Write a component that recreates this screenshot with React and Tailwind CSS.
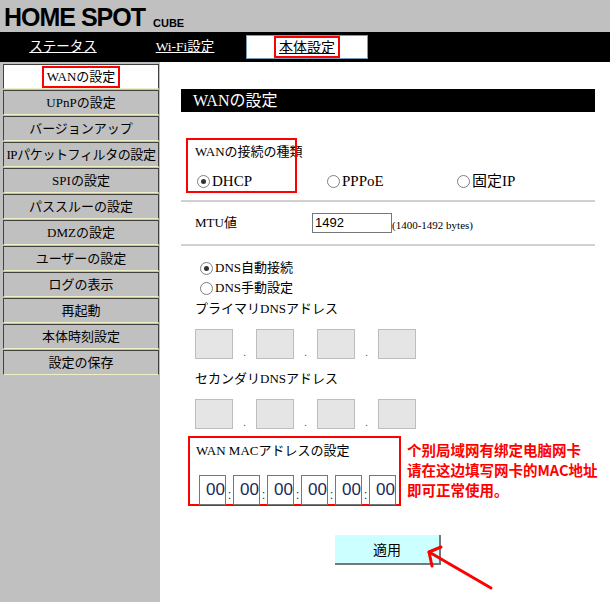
import React from "react";

const jp = { fontFamily: '"Liberation Serif", "Noto Sans CJK JP", serif' };
const sans = { fontFamily: '"Liberation Sans", Arial, sans-serif' };

const menu = [
    "WANの設定",
    "UPnPの設定",
    "バージョンアップ",
    "IPパケットフィルタの設定",
    "SPIの設定",
    "パススルーの設定",
    "DMZの設定",
    "ユーザーの設定",
    "ログの表示",
    "再起動",
    "本体時刻設定",
    "設定の保存",
];

function Radio({ checked }) {
    return (
        <span className="inline-flex items-center justify-center w-[13px] h-[13px] rounded-full border border-[#808080] bg-white mr-[2px]">
            {checked && <span className="w-[5px] h-[5px] rounded-full bg-[#333]" />}
        </span>
    );
}

function IpBoxes() {
    return (
        <div className="flex items-end h-[30px] mt-[10px]">
            {[0, 1, 2, 3].map(i => (
                <div key={i} className="flex items-end">
                    {i > 0 && <span className="w-[23px] text-center text-[10px] leading-[12px] text-[#2040a0]">.</span>}
                    <div className="w-[38px] h-[30px] bg-[#e5e5e5] border border-[#bdbdbd]" />
                </div>
            ))}
        </div>
    );
}

export default function App() {
    return (
        <div className="relative w-[610px] h-[602px] overflow-hidden bg-white text-black" style={jp}>
            {/* header */}
            <div className="h-[32px] bg-[#c0c0c0] flex items-end pl-[4px] pb-[4px]">
                <span className="text-[25px] leading-[22px] font-bold tracking-[-1px]" style={sans}>HOME SPOT</span>
                <span className="text-[11px] leading-[10px] font-bold ml-[8px]" style={sans}>CUBE</span>
            </div>

            {/* nav */}
            <div className="h-[30px] bg-black flex items-center pl-[2px]">
                <div className="w-[122px] text-center text-white text-[13.5px] underline">ステータス</div>
                <div className="w-[122px] text-center text-white text-[13.5px] underline">Wi-Fi設定</div>
                <div className="w-[122px] h-[24px] bg-white border border-[#7b9bb5] flex items-center justify-center">
                    <span className="border-2 border-[#ff0000] px-[3px] h-[22px] flex items-center text-[14px] underline">本体設定</span>
                </div>
            </div>

            <div className="flex h-[540px]">
                {/* sidebar */}
                <div className="w-[160px] bg-[#c0c0c0] pt-[2px] flex flex-col gap-[1px]">
                    {menu.map((m, i) => (
                        <div
                            key={m}
                            className={`ml-[3px] w-[156px] h-[25px] flex items-center justify-center whitespace-nowrap text-[13px] border border-[#404040] border-b-[#f0f0c8] ${i === 3 ? "tracking-[-0.4px]" : ""} ${i === 0 ? "bg-white" : "bg-[#c0c0c0]"}`}
                        >
                            {i === 0 ? (
                                <span className="border-2 border-[#ff0000] px-[3px] h-[22px] flex items-center">{m}</span>
                            ) : m}
                        </div>
                    ))}
                </div>

                {/* content */}
                <div className="flex-1 pl-[21px] pt-[27px]">
                    <div className="w-[414px] h-[23px] bg-black text-white text-[16px] flex items-center pl-[12px]">WANの設定</div>

                    {/* connection type */}
                    <div className="relative mt-[26px] h-[55px] pl-[14px]">
                        <div className="absolute left-[5px] top-0 w-[111px] h-[55px] border-2 border-[#ff0000]" />
                        <div className="pt-[6px] text-[13px] leading-[16px]">WANの接続の種類</div>
                        <div className="flex items-center mt-[12px] text-[15px] leading-[18px] pl-[2px]">
                            <span className="w-[130px] flex items-center"><Radio checked />DHCP</span>
                            <span className="w-[130px] flex items-center"><Radio />PPPoE</span>
                            <span className="flex items-center"><Radio />固定IP</span>
                        </div>
                    </div>

                    <div className="w-[414px] h-[2px] bg-[#d0d0d0] mt-[7px]" />
                    <div className="h-[42px] flex items-center pl-[14px] w-[414px]">
                        <span className="w-[117px] text-[13px]">MTU値</span>
                        <span className="w-[80px] h-[20px] border border-[#777] text-[13px] leading-[18px] pl-[2px]" style={sans}>1492</span>
                        <span className="text-[11px] mt-[4px]">(1400-1492 bytes)</span>
                    </div>
                    <div className="w-[414px] h-[2px] bg-[#d0d0d0]" />

                    <div className="pl-[14px] pt-[12px] text-[13px] leading-[20px]">
                        <div className="flex items-center pl-[5px]"><Radio checked />DNS自動接続</div>
                        <div className="flex items-center pl-[5px]"><Radio />DNS手動設定</div>
                        <div className="mt-[1px]">プライマリDNSアドレス</div>
                        <IpBoxes />
                        <div className="mt-[10px]">セカンダリDNSアドレス</div>
                        <IpBoxes />
                    </div>

                    {/* MAC */}
                    <div className="flex mt-[7px] ml-[7px]">
                        <div className="w-[213px] h-[70px] border-2 border-[#ff0000] pl-[6px] pt-[5px]">
                            <div className="text-[13px] leading-[16px]">WAN MACアドレスの設定</div>
                            <div className="flex items-end mt-[16px] ml-[3px]">
                                {[0, 1, 2, 3, 4, 5].map(i => (
                                    <div key={i} className="flex items-end">
                                        {i > 0 && <span className="w-[7px] text-center text-[13px] leading-[20px] text-[#333]" style={sans}>:</span>}
                                        <div className="w-[27px] h-[30px] border border-[#777] text-right text-[17px] leading-[28px] text-[#1a2a5a]" style={sans}>00</div>
                                    </div>
                                ))}
                            </div>
                        </div>
                        <div
                            className="ml-[6px] mt-[4px] text-[#ff0000] font-bold text-[14.5px] leading-[20px]"
                            style={{ fontFamily: '"Noto Sans CJK SC", sans-serif' }}
                        >
                            <div>个别局域网有绑定电脑网卡</div>
                            <div>请在这边填写网卡的MAC地址</div>
                            <div>即可正常使用。</div>
                        </div>
                    </div>

                    <div className="ml-[154px] mt-[29px] w-[106px] h-[30px] bg-[#ccffff] border-r-2 border-b-2 border-[#777] flex items-center justify-center text-[14px]" style={{ fontFamily: '"Noto Sans CJK JP", sans-serif' }}>
                        適用
                    </div>
                </div>
            </div>

            {/* annotation arrow */}
            <svg className="absolute left-[420px] top-[540px] pointer-events-none" width="80" height="56" viewBox="0 0 80 56">
                <path d="M71 48 L9 12" stroke="#ff0000" strokeWidth="3" fill="none" strokeLinecap="round" />
                <path d="M21 7 L9 12 L12 26" stroke="#ff0000" strokeWidth="3" fill="none" strokeLinecap="round" strokeLinejoin="round" />
            </svg>
        </div>
    );
}
